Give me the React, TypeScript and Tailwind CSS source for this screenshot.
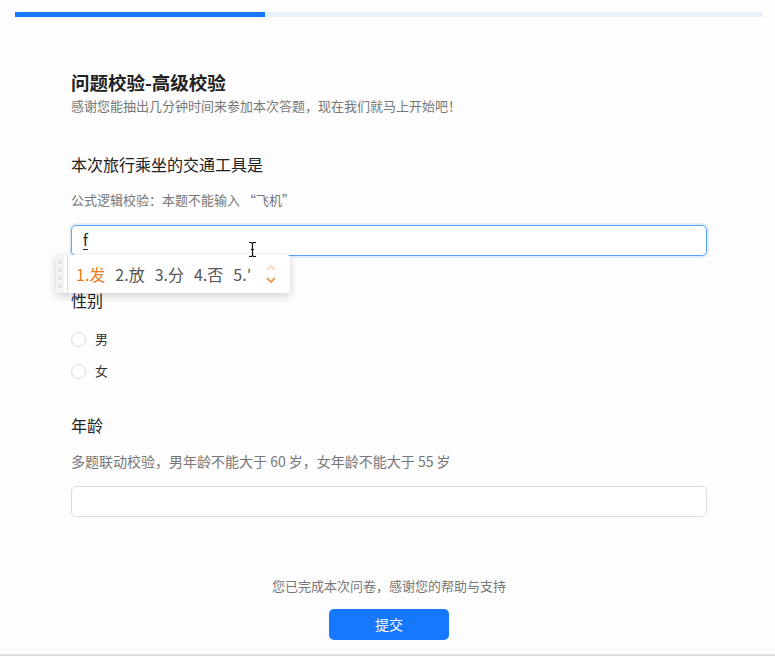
import React from 'react';

const font = { fontFamily: '"Noto Sans CJK SC", "Liberation Sans", sans-serif' };

// I-beam text cursor over the first input
const TextCursor = () => (
  <svg width="9" height="17" viewBox="0 0 9 17" className="absolute left-[248px] top-[241px]">
    <path d="M1 1.5h2.5L4.5 2.5 5.5 1.5H8M4.5 2.5v12M1 15.5h2.5l1-1 1 1H8M3 8.5h3" stroke="#111" strokeWidth="1.2" fill="none" />
  </svg>
);

// Pinyin candidate window shown under the input
const CandidateBar = () => (
  <div className="absolute left-[56px] top-[255px] w-[234px] h-[38px] bg-white rounded-r-[3px] shadow-[0_3px_8px_rgba(0,0,0,0.18)] flex items-center">
    <div className="w-[8px] h-full bg-[#f4f4f4] flex flex-col justify-center items-center gap-[5px]">
      <span className="w-[3px] h-[3px] rounded-full bg-[#d8d8d8]" />
      <span className="w-[3px] h-[3px] rounded-full bg-[#d8d8d8]" />
      <span className="w-[3px] h-[3px] rounded-full bg-[#d8d8d8]" />
      <span className="w-[3px] h-[3px] rounded-full bg-[#d8d8d8]" />
    </div>
    <div className="ml-[3px] w-[1px] h-full bg-[#f9d3c2]" />
    <div className="ml-[8px] flex items-center gap-[10px] text-[16px] text-[#555]" style={font}>
      <span className="text-[#f07a1c]">1.发</span>
      <span>2.放</span>
      <span>3.分</span>
      <span>4.否</span>
      <span className="w-[18px] overflow-hidden whitespace-nowrap">5.′</span>
    </div>
    <div className="ml-auto mr-[14px] flex flex-col items-center gap-[6px]">
      <svg width="10" height="6" viewBox="0 0 10 6"><path d="M1 5l4-4 4 4" stroke="#fbc9a8" strokeWidth="1.4" fill="none" /></svg>
      <svg width="10" height="6" viewBox="0 0 10 6"><path d="M1 1l4 4 4-4" stroke="#f07a1c" strokeWidth="1.4" fill="none" /></svg>
    </div>
  </div>
);

const Radio = ({ label, className }: { label: string; className: string }) => (
  <label className={`flex items-center h-[20px] ${className}`}>
    <span className="w-[15px] h-[15px] rounded-full border border-[#d9d9d9] bg-white" />
    <span className="ml-[9px] text-[13px] text-[#333]">{label}</span>
  </label>
);

export default function App() {
  return (
    <div className="relative w-full h-[657px] bg-[#fdfdfd] overflow-hidden" style={font}>
      {/* progress */}
      <div className="pt-[12px] px-[15px]">
        <div className="h-[5px] w-[748px] bg-[#e6f1fc]">
          <div className="h-full w-[250px] bg-[#1677ff]" />
        </div>
      </div>

      <div className="pl-[71px] pr-[68px]">
        <h1 className="mt-[51px] text-[18.5px] leading-[28px] font-bold text-[#222]">问题校验-高级校验</h1>
        <p className="text-[13px] leading-[20px] text-[#777]">感谢您能抽出几分钟时间来参加本次答题，现在我们就马上开始吧！</p>

        <div className="mt-[36px] text-[16px] leading-[24px] text-[#222]">本次旅行乘坐的交通工具是</div>
        <div className="mt-[14px] text-[13px] leading-[20px] text-[#777]">公式逻辑校验：本题不能输入 “飞机”</div>
        <div className="mt-[15px] h-[31px] rounded-[5px] border border-[#5aa2ff] shadow-[0_0_0_2px_rgba(22,119,255,0.12)] bg-white flex items-center pl-[11px]">
          <span className="text-[15px] text-[#222] underline underline-offset-[3px]">f</span>
        </div>

        <div className="mt-[32px] text-[16px] leading-[24px] text-[#222]">性别</div>
        <Radio label="男" className="mt-[17px]" />
        <Radio label="女" className="mt-[12px]" />

        <div className="mt-[32px] text-[16px] leading-[24px] text-[#222]">年龄</div>
        <div className="mt-[14px] text-[14px] leading-[20px] text-[#777]">多题联动校验，男年龄不能大于 60 岁，女年龄不能大于 55 岁</div>
        <div className="mt-[15px] h-[31px] rounded-[5px] border border-[#dcdcdc] bg-white" />

        <div className="mt-[59px] text-center text-[13px] leading-[20px] text-[#777]">您已完成本次问卷，感谢您的帮助与支持</div>
        <div className="mt-[13px] flex justify-center">
          <button className="w-[120px] h-[31px] rounded-[5px] bg-[#1677ff] text-white text-[14px]">提交</button>
        </div>
      </div>

      <CandidateBar />
      <TextCursor />
      <div className="absolute left-0 right-0 top-[654px] h-[2px] bg-[#dedede]" />
    </div>
  );
}
